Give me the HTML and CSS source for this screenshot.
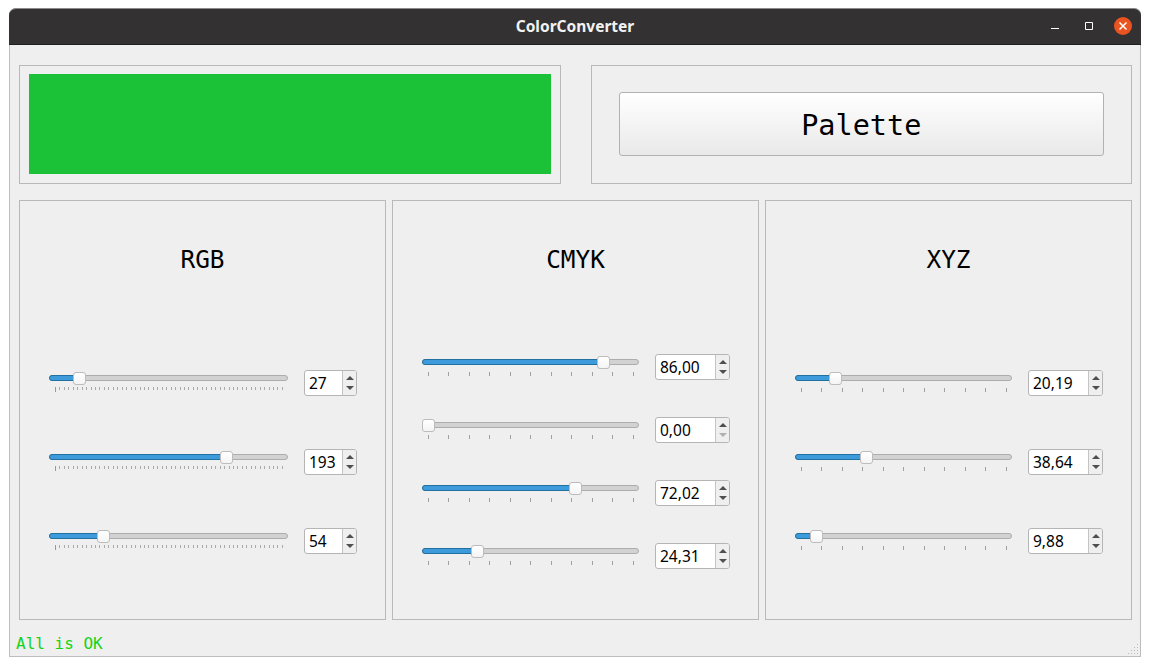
FILE: index.html
```html
<!DOCTYPE html>
<html>
<head>
  <meta charset="utf-8">
  <meta name="viewport" content="width=device-width, initial-scale=1.0">
  <title>ColorConverter</title>
  <link rel="stylesheet" href="styles.css">
</head>
<body>
<div class="window">
  <header class="titlebar">
    <h1>ColorConverter</h1>
    <div class="controls">
      <svg width="10" height="10" viewBox="0 0 10 10"><path d="M1 7.5h8" stroke="#fff" fill="none"/></svg>
      <svg width="10" height="10" viewBox="0 0 10 10"><path d="M1.5 1.5h7v7h-7z" stroke="#fff" fill="none"/></svg>
      <svg width="18" height="18" viewBox="0 0 18 18"><circle cx="9" cy="9" r="9" fill="#e95420"/><path d="M5.5 5.5l7 7M12.5 5.5l-7 7" stroke="#fff" stroke-width="1.5" fill="none"/></svg>
    </div>
  </header>
  <main class="content">
    <section class="top">
      <div class="panel swatch-panel"><div class="swatch"></div></div>
      <div class="panel button-panel"><button class="palette" type="button">Palette</button></div>
    </section>
    <section class="bottom">
      <div class="panel model">
        <h2>RGB</h2>
        <div class="rows rows-wide">
          <div class="row">
            <div class="slider"><div class="groove"><div class="fill" style="--pos:0.106"></div></div><div class="handle" style="--pos:0.106"></div><div class="ticks ticks-fine"></div></div>
            <div class="spin spin-int"><span class="val">27</span><span class="btns"><i class="up"></i><i class="down"></i></span></div>
          </div>
          <div class="row">
            <div class="slider"><div class="groove"><div class="fill" style="--pos:0.757"></div></div><div class="handle" style="--pos:0.757"></div><div class="ticks ticks-fine"></div></div>
            <div class="spin spin-int"><span class="val">193</span><span class="btns"><i class="up"></i><i class="down"></i></span></div>
          </div>
          <div class="row">
            <div class="slider"><div class="groove"><div class="fill" style="--pos:0.212"></div></div><div class="handle" style="--pos:0.212"></div><div class="ticks ticks-fine"></div></div>
            <div class="spin spin-int"><span class="val">54</span><span class="btns"><i class="up"></i><i class="down"></i></span></div>
          </div>
        </div>
      </div>
      <div class="panel model">
        <h2>CMYK</h2>
        <div class="rows rows-tight">
          <div class="row">
            <div class="slider"><div class="groove"><div class="fill" style="--pos:0.86"></div></div><div class="handle" style="--pos:0.86"></div><div class="ticks"></div></div>
            <div class="spin"><span class="val">86,00</span><span class="btns"><i class="up"></i><i class="down"></i></span></div>
          </div>
          <div class="row">
            <div class="slider"><div class="groove"><div class="fill" style="--pos:0"></div></div><div class="handle" style="--pos:0"></div><div class="ticks"></div></div>
            <div class="spin"><span class="val">0,00</span><span class="btns"><i class="up"></i><i class="down off"></i></span></div>
          </div>
          <div class="row">
            <div class="slider"><div class="groove"><div class="fill" style="--pos:0.72"></div></div><div class="handle" style="--pos:0.72"></div><div class="ticks"></div></div>
            <div class="spin"><span class="val">72,02</span><span class="btns"><i class="up"></i><i class="down"></i></span></div>
          </div>
          <div class="row">
            <div class="slider"><div class="groove"><div class="fill" style="--pos:0.24"></div></div><div class="handle" style="--pos:0.24"></div><div class="ticks"></div></div>
            <div class="spin"><span class="val">24,31</span><span class="btns"><i class="up"></i><i class="down"></i></span></div>
          </div>
        </div>
      </div>
      <div class="panel model">
        <h2>XYZ</h2>
        <div class="rows rows-wide">
          <div class="row">
            <div class="slider"><div class="groove"><div class="fill" style="--pos:0.166"></div></div><div class="handle" style="--pos:0.166"></div><div class="ticks"></div></div>
            <div class="spin"><span class="val">20,19</span><span class="btns"><i class="up"></i><i class="down"></i></span></div>
          </div>
          <div class="row">
            <div class="slider"><div class="groove"><div class="fill" style="--pos:0.317"></div></div><div class="handle" style="--pos:0.317"></div><div class="ticks"></div></div>
            <div class="spin"><span class="val">38,64</span><span class="btns"><i class="up"></i><i class="down"></i></span></div>
          </div>
          <div class="row">
            <div class="slider"><div class="groove"><div class="fill" style="--pos:0.073"></div></div><div class="handle" style="--pos:0.073"></div><div class="ticks"></div></div>
            <div class="spin"><span class="val">9,88</span><span class="btns"><i class="up"></i><i class="down"></i></span></div>
          </div>
        </div>
      </div>
    </section>
    <footer class="status">All is OK</footer>
  </main>
  <svg class="grip" width="11" height="11" viewBox="0 0 11 11" fill="#bbb">
    <rect x="9" y="0" width="1" height="1"/>
    <rect x="6" y="3" width="1" height="1"/><rect x="9" y="3" width="1" height="1"/>
    <rect x="3" y="6" width="1" height="1"/><rect x="6" y="6" width="1" height="1"/><rect x="9" y="6" width="1" height="1"/>
    <rect x="0" y="9" width="1" height="1"/><rect x="3" y="9" width="1" height="1"/><rect x="6" y="9" width="1" height="1"/><rect x="9" y="9" width="1" height="1"/>
  </svg>
</div>
</body>
</html>
```
FILE: styles.css
```css
html, body { margin: 0; padding: 0; background: #fff; }
body { padding: 8px 0 0 9px; font-family: "Noto Sans", sans-serif; color: #000; }
.window { position: relative; box-sizing: border-box; width: 1132px; height: 649px; display: flex; flex-direction: column; background: #efefef; border: 1px solid #bdbdbd; border-top: 0; border-radius: 7px 7px 0 0; }

.titlebar { flex: none; box-sizing: border-box; height: 37px; margin: 0 -1px; padding-bottom: 1px; display: flex; align-items: center; justify-content: center; position: relative; background: #333131; border-top: 1px solid #8a8a8a; border-bottom: 1px solid #1f1f1f; border-radius: 7px 7px 0 0; }
.titlebar h1 { margin: 0; font-size: 15.5px; font-weight: 700; color: #f2f2f2; }
.controls { position: absolute; right: 9px; top: 8px; display: flex; align-items: center; gap: 24px; }
.controls svg:last-child { margin-left: -4px; }

.content { flex: 1; display: flex; flex-direction: column; padding: 20px 8px 0 9px; }
.panel { box-sizing: border-box; border: 1px solid #b9b9b9; }
.top { display: grid; grid-template-columns: 1fr 1fr; gap: 30px; height: 119px; }
.swatch-panel { padding: 8px 9px 9px; }
.swatch { height: 100px; background: #1bc136; }
.button-panel { padding: 26px 27px; }
.palette { display: block; width: 100%; height: 64px; padding: 2px 0 0; border: 1px solid #b2b2b2; border-radius: 3px; background: linear-gradient(#fff, #e9e9e9); font-family: "DejaVu Sans Mono", monospace; font-size: 28.5px; color: #000; }

.bottom { display: flex; gap: 6px; height: 420px; margin-top: 16px; }
.model { flex: 1; display: flex; flex-direction: column; }
.model h2 { flex: none; height: 118px; margin: 0; line-height: 118px; text-align: center; font-family: "DejaVu Sans Mono", monospace; font-size: 24.4px; font-weight: 400; }
.rows { flex: 1; display: flex; flex-direction: column; justify-content: center; padding: 0 28px 15px 29px; }
.rows-wide { gap: 53px; }
.rows-tight { gap: 37px; }
.row { display: flex; gap: 16px; height: 26px; }

.slider { flex: 1; position: relative; }
.groove { position: absolute; left: 0; right: 0; top: 5px; box-sizing: border-box; height: 6px; background: #d2d2d2; border: 1px solid #adadad; border-radius: 3px; }
.fill { position: absolute; left: -1px; top: -1px; height: 6px; width: calc((100% - 12px) * var(--pos) + 8px); background: #3d9bdc; border: 1px solid #22709f; border-radius: 3px 0 0 3px; box-sizing: border-box; }
.handle { position: absolute; top: 2px; box-sizing: border-box; width: 13px; height: 13px; left: calc((100% - 13px) * var(--pos)); background: linear-gradient(#fff, #f4f4f4); border: 1px solid #bcbcbc; border-radius: 3px; }
.ticks { position: absolute; left: 6px; right: 5px; top: 18px; height: 4px; background: repeating-linear-gradient(90deg, #a0a0a0 0 1px, transparent 1px 20px, #a0a0a0 20px 21px, transparent 21px 41px); }
.ticks-fine { top: 17px; height: 3px; background: repeating-linear-gradient(90deg, #aaa 0 1px, transparent 1px 4.45px); }
.ticks-fine::before { content: ""; position: absolute; left: 0; top: 0; width: 1px; height: 5px; background: #999; }

.spin { flex: none; box-sizing: border-box; width: 75px; height: 26px; display: flex; background: #fff; border: 1px solid #b5b5b5; border-radius: 3px; }
.spin-int { width: 53px; }
.val { flex: 1; padding-left: 4px; font-size: 15.5px; line-height: 24px; }
.btns { flex: none; box-sizing: border-box; width: 14px; display: flex; flex-direction: column; align-items: center; justify-content: center; gap: 6px; background: #efefef; border-left: 1px solid #c4c4c4; border-radius: 0 2px 2px 0; }
.btns i { width: 0; height: 0; border-left: 4px solid transparent; border-right: 4px solid transparent; }
.up { border-bottom: 4px solid #4f4f4f; }
.down { border-top: 4px solid #4f4f4f; }
.down.off { border-top-color: #b0b0b0; }

.status { flex: 1; padding: 14px 0 0 6px; margin-left: -9px; font-family: "DejaVu Sans Mono", monospace; font-size: 16px; line-height: 20px; color: #16d316; }
.grip { position: absolute; right: 1px; bottom: 1px; }
```
